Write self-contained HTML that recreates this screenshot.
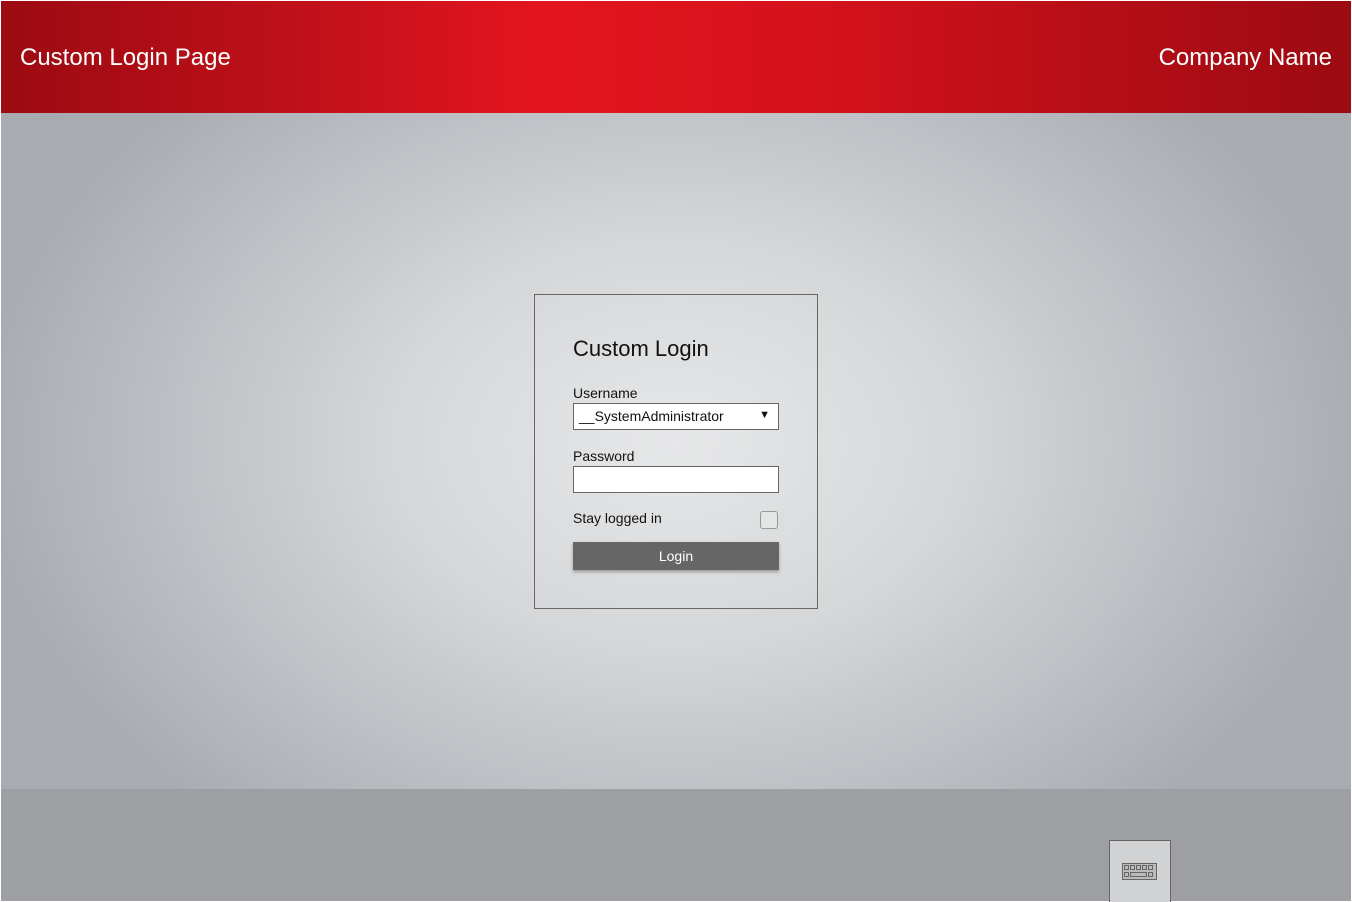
<!DOCTYPE html>
<html><head><meta charset="utf-8"><style>
*{margin:0;padding:0;box-sizing:border-box}
body{width:1352px;height:902px;background:#fff;position:relative;overflow:hidden;font-family:"Segoe UI","Liberation Sans",sans-serif}
#hdr{position:absolute;left:1px;top:1px;width:1350px;height:112px;background:linear-gradient(90deg,#9c0a12 0%,#c5111a 25%,#e4141e 40%,#d5121b 60%,#b80e16 80%,#9c0a12 100%);color:#fff;font-size:24px}
#hdr .l{position:absolute;left:19px;top:43px}
#hdr .r{position:absolute;right:19px;top:43px}
#main{position:absolute;left:1px;top:113px;width:1350px;height:676px;background:radial-gradient(ellipse 700px 500px at 675px 330px,#e6e7e8 0%,#d5d7d9 40%,#a8abb2 100%)}
#foot{position:absolute;left:1px;top:789px;width:1350px;height:112px;background:#9d9fa3}
#kb{position:absolute;left:1109px;top:840px;width:62px;height:62px;background:#d1d2d3;border:1px solid #666;border-bottom:none}
#box{position:absolute;left:534px;top:294px;width:284px;height:315px;border:1px solid #666}
.t{position:absolute;color:#111}
.inp{position:absolute;left:38px;width:206px;height:27px;background:#fff;border:1px solid #666}
</style></head><body>
<div id="hdr"><span class="l">Custom Login Page</span><span class="r">Company Name</span></div>
<div id="main"></div>
<div id="foot"></div>
<div id="kb"><svg width="62" height="62" style="position:absolute;left:-1px;top:-1px"><g fill="none" stroke="#666" stroke-width="1"><rect x="13.5" y="23.5" width="34" height="16" fill="#bbb"/><rect x="15.5" y="25.5" width="4" height="4"/><rect x="21.5" y="25.5" width="4" height="4"/><rect x="27.5" y="25.5" width="4" height="4"/><rect x="33.5" y="25.5" width="4" height="4"/><rect x="39.5" y="25.5" width="4" height="4"/><rect x="15.5" y="32.5" width="4" height="4"/><rect x="21.5" y="32.5" width="16" height="4"/><rect x="39.5" y="32.5" width="4" height="4"/></g></svg></div>
<div id="box">
<div class="t" style="left:38px;top:41px;font-size:22px">Custom Login</div>
<div class="t" style="left:38px;top:90px;font-size:14px">Username</div>
<div class="inp" style="top:108px;font-size:14px;padding:4px 0 0 5px;color:#111">__SystemAdministrator<span style="position:absolute;right:8px;top:5px;font-size:11px">▼</span></div>
<div class="t" style="left:38px;top:153px;font-size:14px">Password</div>
<div class="inp" style="top:171px"></div>
<div class="t" style="left:38px;top:215px;font-size:14px">Stay logged in</div>
<div style="position:absolute;left:225px;top:216px;width:18px;height:18px;border:1px solid #999;border-radius:3px;background:#e4e5e6"></div>
<div style="position:absolute;left:38px;top:247px;width:206px;height:28px;background:#666;color:#fff;font-size:14px;text-align:center;line-height:29px;box-shadow:0 2px 3px rgba(0,0,0,.3)">Login</div>
</div>
</body></html>
